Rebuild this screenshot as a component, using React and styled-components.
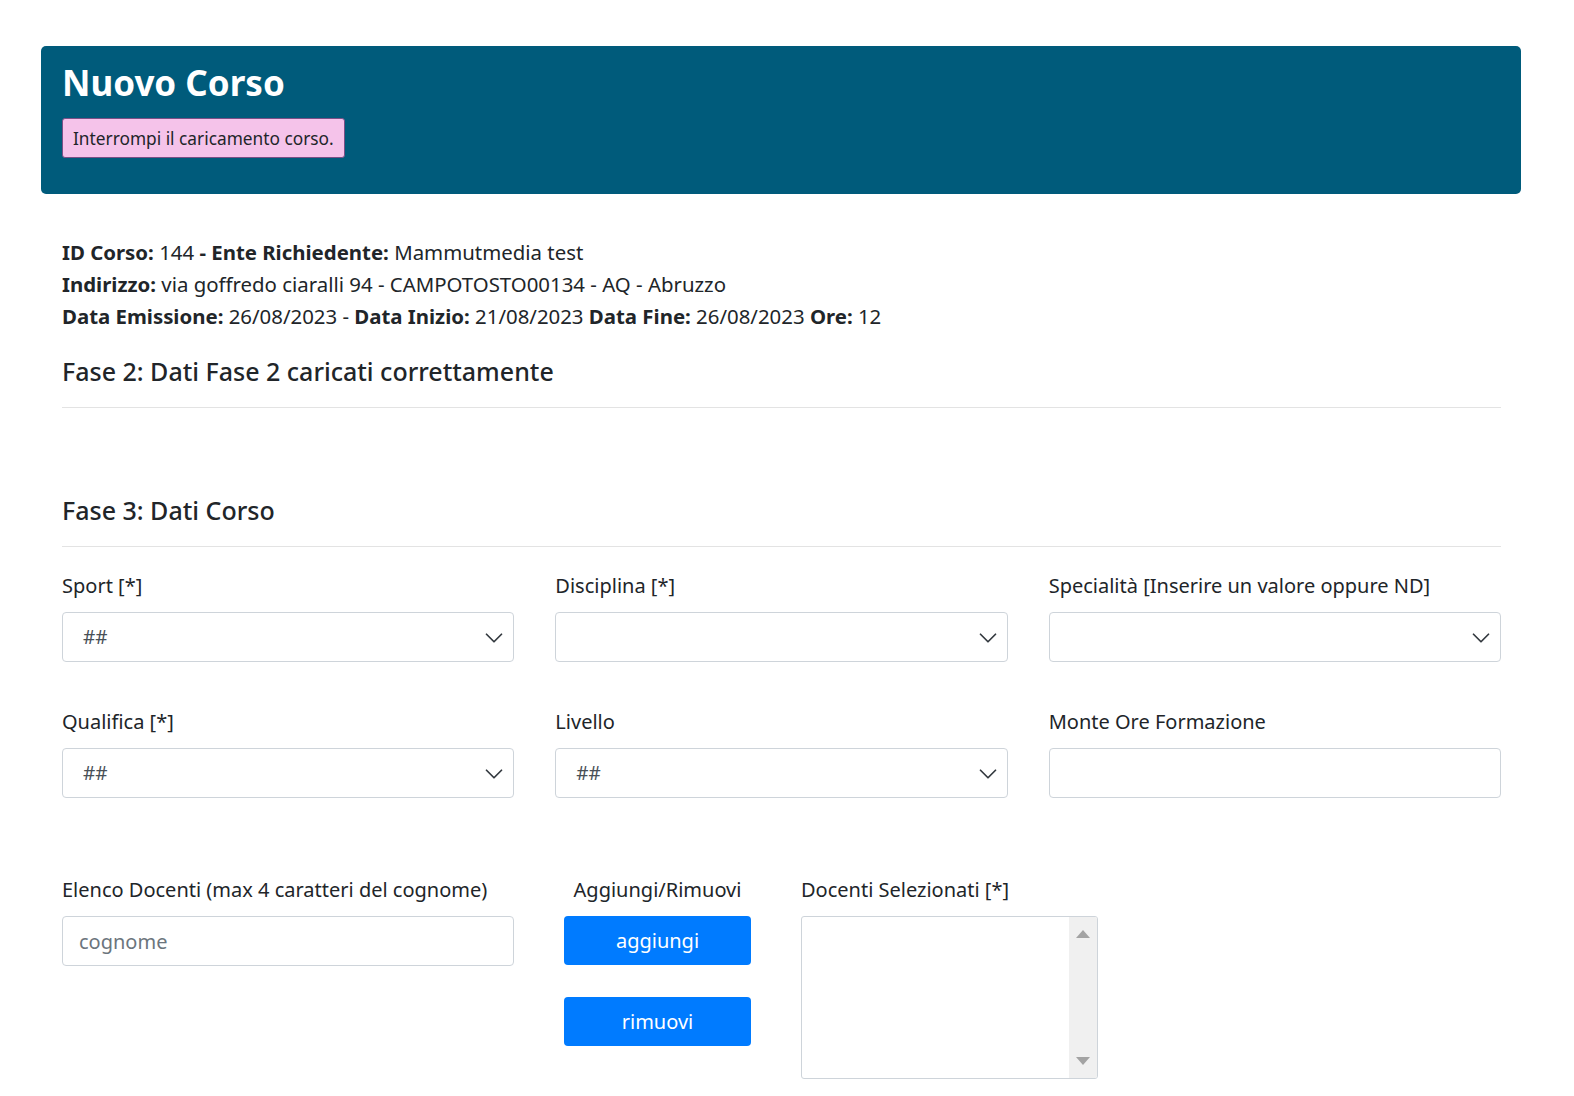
import React from 'react'
import styled, { createGlobalStyle } from 'styled-components';

const GlobalStyle = createGlobalStyle`
  body {
    margin: 0;
    background: #fff;
    font-family: "Noto Sans", "Open Sans", sans-serif;
    color: #212529;
  }
`;

const Page = styled.div`
  padding: 46px 53px 40px 41px;
`;

const Header = styled.div`
  background-color: #005b7b;
  border-radius: 5px;
  padding: 14px 21px 36px;
`;
const Title = styled.h1`
  margin: 0 0 12px;
  color: #fff;
  font-size: 35px;
  font-weight: 700;
  line-height: 46px;
`;
const StopButton = styled.button`
  font-family: inherit;
  font-size: 17.3px;
  color: #212529;
  background: #f5c3ea;
  border: 1px solid #7a4f86;
  border-radius: 3px;
  padding: 0 10px;
  height: 40px;
`;

const Body = styled.div`
  padding: 42px 20px 0 21px;
`;
const Info = styled.div`
  font-size: 20.4px;
  line-height: 32px;
  b { font-weight: 700; }
`;
const SectionTitle = styled.h4`
  margin: ${p => p.top}px 0 0;
  font-size: 25px;
  font-weight: 500;
  line-height: 34px;
  padding-bottom: 19px;
  border-bottom: 1px solid #e3e3e3;
`;

const Grid = styled.div`
  display: grid;
  grid-template-columns: repeat(3, 1fr);
  column-gap: 41px;
  row-gap: 45px;
  margin-top: 24px;
`;
const Field = styled.div`
  display: flex;
  flex-direction: column;
`;
const Label = styled.label`
  font-size: 20px;
  line-height: 30px;
  margin-bottom: 11px;
  text-align: ${p => p.center ? 'center' : 'left'};
  white-space: nowrap;
`;
const SelectBox = styled.div`
  position: relative;
  height: 50px;
  border: 1px solid #ced4da;
  border-radius: 4px;
  display: flex;
  align-items: center;
  padding: 0 20px;
  font-size: 19px;
  color: #495057;
  box-sizing: border-box;
`;
const Chevron = styled.svg`
  position: absolute;
  right: 9px;
  top: 15px;
`;
const TextInput = styled.input`
  height: 50px;
  border: 1px solid #ced4da;
  border-radius: 4px;
  padding: 0 16px;
  font-family: inherit;
  font-size: 20px;
  color: #495057;
  box-sizing: border-box;
  width: 100%;
  &::placeholder { color: #6c757d; }
`;

const BottomRow = styled.div`
  display: grid;
  grid-template-columns: 452px 187px 297px;
  column-gap: 50px;
  margin-top: 77px;
  align-items: start;
`;
const ButtonCol = styled.div`
  display: flex;
  flex-direction: column;
  align-items: center;
`;
const Buttons = styled.div`
  display: flex;
  flex-direction: column;
  gap: 32px;
`;
const BlueButton = styled.button`
  width: 187px;
  height: 49px;
  background: #007bff;
  border: none;
  border-radius: 4px;
  color: #fff;
  font-family: inherit;
  font-size: 20px;
`;
const ListBox = styled.div`
  height: 163px;
  border: 1px solid #ced4da;
  border-radius: 3px;
  display: flex;
  justify-content: flex-end;
  overflow: hidden;
  box-sizing: border-box;
`;
const ScrollTrack = styled.div`
  width: 28px;
  background: #f0f0f0;
  display: flex;
  flex-direction: column;
  justify-content: space-between;
  align-items: center;
  padding: 12px 0;
`;

const Arrow = ({ down }) => (
  <svg width="16" height="10" viewBox="0 0 16 10">
    <polygon points={down ? "1,1 15,1 8,9" : "8,1 15,9 1,9"} fill="#a3a3a3" />
  </svg>
);

const Select = ({ value }) => (
  <SelectBox>
    {value}
    <Chevron width="20" height="20" viewBox="0 0 16 16">
      <path d="M2 5l6 6 6-6" fill="none" stroke="#343a40" strokeWidth="1.4" strokeLinecap="round" strokeLinejoin="round" />
    </Chevron>
  </SelectBox>
);

const App = () => {
  return (
    <Page>
      <GlobalStyle />
      <Header>
        <Title>Nuovo Corso</Title>
        <StopButton>Interrompi il caricamento corso.</StopButton>
      </Header>
      <Body>
        <Info>
          <div><b>ID Corso:</b> 144 <b>- Ente Richiedente:</b> Mammutmedia test</div>
          <div><b>Indirizzo:</b> via goffredo ciaralli 94 - CAMPOTOSTO00134 - AQ - Abruzzo</div>
          <div><b>Data Emissione:</b> 26/08/2023 - <b>Data Inizio:</b> 21/08/2023 <b>Data Fine:</b> 26/08/2023 <b>Ore:</b> 12</div>
        </Info>
        <SectionTitle top={22}>Fase 2: Dati Fase 2 caricati correttamente</SectionTitle>
        <SectionTitle top={85}>Fase 3: Dati Corso</SectionTitle>
        <Grid>
          <Field>
            <Label>Sport [*]</Label>
            <Select value="##" />
          </Field>
          <Field>
            <Label>Disciplina [*]</Label>
            <Select value="" />
          </Field>
          <Field>
            <Label>Specialità [Inserire un valore oppure ND]</Label>
            <Select value="" />
          </Field>
          <Field>
            <Label>Qualifica [*]</Label>
            <Select value="##" />
          </Field>
          <Field>
            <Label>Livello</Label>
            <Select value="##" />
          </Field>
          <Field>
            <Label>Monte Ore Formazione</Label>
            <TextInput />
          </Field>
        </Grid>
        <BottomRow>
          <Field>
            <Label>Elenco Docenti (max 4 caratteri del cognome)</Label>
            <TextInput placeholder="cognome" />
          </Field>
          <ButtonCol>
            <Label center>Aggiungi/Rimuovi</Label>
            <Buttons>
              <BlueButton>aggiungi</BlueButton>
              <BlueButton>rimuovi</BlueButton>
            </Buttons>
          </ButtonCol>
          <Field>
            <Label>Docenti Selezionati [*]</Label>
            <ListBox>
              <ScrollTrack>
                <Arrow />
                <Arrow down />
              </ScrollTrack>
            </ListBox>
          </Field>
        </BottomRow>
      </Body>
    </Page>
  )
}

export default App
